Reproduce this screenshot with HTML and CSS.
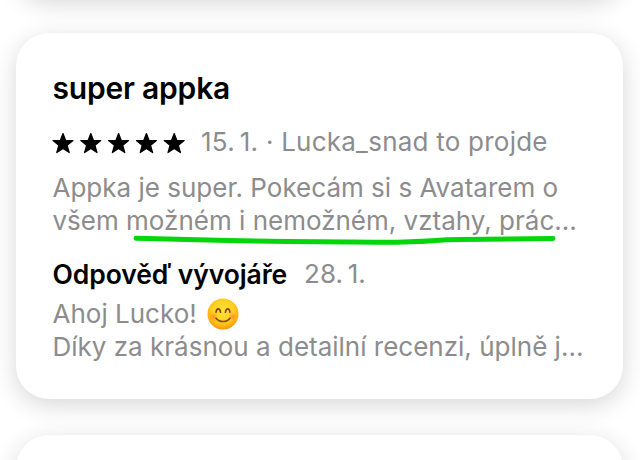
FILE: index.html
```
<!DOCTYPE html>
<html lang="cs">
<head>
<meta charset="utf-8">
<title>Recenze</title>
<link rel="stylesheet" href="styles.css">
</head>
<body>
<main class="reviews">
  <div class="card card-prev"></div>
  <article class="card review">
    <h2 class="title"><span>super appka</span></h2>
    <div class="meta">
      <svg class="stars" width="134" height="24" viewBox="0 0 134 24">
        <defs><path id="star" d="M11 2.5 13.6 9.3 21 9.6 15.2 14.3 17.2 21.6 11 17.4 4.8 21.6 6.8 14.3 1 9.6 8.4 9.3Z"/></defs>
        <use href="#star"/><use href="#star" x="27.8"/><use href="#star" x="55.6"/><use href="#star" x="83.4"/><use href="#star" x="111.2"/>
      </svg>
      <span class="byline">15.&#8201;1. · Lucka_snad to projde</span>
    </div>
    <div class="body">
      <p class="line"><span class="b1">Appka je super. Pokecám si s Avatarem o</span></p>
      <p class="line"><span class="b2">všem možném i nemožném, vztahy, prác...</span></p>
      <svg class="marker" width="424" height="12" viewBox="0 0 424 12"><path d="M4 4.3C70 6.2 170 8.3 252 8.2C302 8 296 5.8 330 5.5L421 4.5"/></svg>
    </div>
    <div class="reply-head"><h3 class="reply-title">Odpověď vývojáře</h3><span class="reply-date">28.&#8201;1.</span></div>
    <div class="reply">
      <p class="line"><span class="r1">Ahoj Lucko!</span>
        <svg class="emoji" width="32" height="32" viewBox="0 0 32 32">
          <defs><radialGradient id="face" cx=".5" cy=".4" r=".6"><stop offset="0" stop-color="#ffe33b"/><stop offset=".6" stop-color="#ffcf20"/><stop offset=".86" stop-color="#ffae0c"/><stop offset="1" stop-color="#f78d08"/></radialGradient>
          <radialGradient id="blush"><stop offset="0" stop-color="#ff7a22" stop-opacity=".7"/><stop offset="1" stop-color="#ff8a22" stop-opacity="0"/></radialGradient></defs>
          <circle cx="16" cy="16" r="15.5" fill="url(#face)"/>
          <circle cx="6.5" cy="18.5" r="4.6" fill="url(#blush)"/><circle cx="25.5" cy="18.5" r="4.6" fill="url(#blush)"/>
          <path class="feature" d="M9 14.3C9.6 9.7 12.9 9.7 13.6 14.3M18.4 14.3C19.1 9.7 22.4 9.7 23 14.3M9 20.2C12.5 24.6 19.5 24.6 23 20.2"/>
        </svg>
      </p>
      <p class="line"><span class="r2">Díky za krásnou a detailní recenzi, úplně j...</span></p>
    </div>
  </article>
  <div class="card card-next"></div>
</main>
</body>
</html>
```
FILE: styles.css
```
* { box-sizing: border-box; margin: 0; padding: 0; }
body {
  height: 460px;
  overflow: hidden;
  background: #fff;
  font-family: Inter, "Liberation Sans", sans-serif;
  font-size: 26px;
  line-height: 32px;
  color: #8c8c8e;
}
.reviews {
  display: flex;
  flex-direction: column;
  justify-content: center;
  gap: 36px;
  width: 607px;
  height: 432px;
  margin-left: 16px;
}
.card {
  flex: none;
  width: 607px;
  height: 366px;
  border-radius: 33px;
  background: #fff;
  box-shadow: 0 6px 24px rgba(0, 0, 0, .16);
}
.review { padding: 39px 0 0 36.5px; }
.title, .line, .reply-head { height: 32px; white-space: nowrap; }
.title { font-size: 30px; font-weight: 600; color: #000; letter-spacing: -.2px; }
.meta { display: flex; align-items: center; gap: 15.5px; height: 32px; margin-top: 22px; white-space: nowrap; }
.byline { letter-spacing: .23px; }
.body { position: relative; margin-top: 14px; }
.body .line + .line { margin-top: 1px; }
.marker { position: absolute; left: 79px; top: 61.5px; fill: none; stroke: #05d60b; stroke-width: 5; stroke-linecap: round; }
.reply-head { display: flex; gap: 17px; margin-top: 21px; }
.reply-title { font-size: 26.5px; font-weight: 600; color: #000; letter-spacing: -.1px; }
.reply { margin-top: 8px; }
.reply .line + .line { margin-top: 1px; }
.reply .line:first-child { display: flex; gap: 10px; }
.stars { margin: 2px 0 0 -1px; fill: #000; stroke: #000; stroke-width: 1.2; stroke-linejoin: round; }
.feature { fill: none; stroke: #85480e; stroke-width: 1.6; stroke-linecap: round; }
```
